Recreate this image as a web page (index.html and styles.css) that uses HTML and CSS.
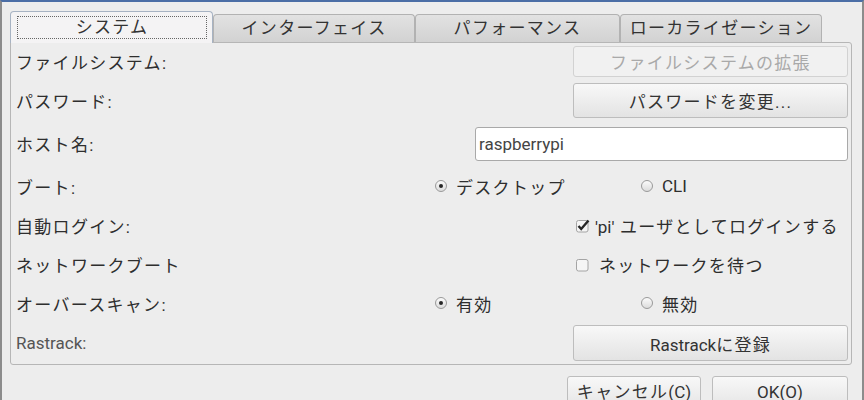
FILE: index.html
```html
<!DOCTYPE html>
<html lang="ja">
<head>
  <meta charset="UTF-8" />
  <title>Raspberry Pi の設定</title>
  <link rel="stylesheet" href="styles.css">
</head>
<body>

  <div class="window">
    <div class="tabs">
      <div class="tab active"><span class="focus">システム</span></div>
      <div class="tab">インターフェイス</div>
      <div class="tab perf">パフォーマンス</div>
      <div class="tab">ローカライゼーション</div>
    </div>

    <div class="panel">
      <div class="row r1">
        <span class="label">ファイルシステム:</span>
        <button class="btn side" disabled>ファイルシステムの拡張</button>
      </div>
      <div class="row r2">
        <span class="label">パスワード:</span>
        <button class="btn side">パスワードを変更...</button>
      </div>
      <div class="row r3">
        <span class="label">ホスト名:</span>
        <input class="field" type="text" value="raspberrypi">
      </div>
      <div class="row r4">
        <span class="label">ブート:</span>
        <div class="opts">
          <span class="opt">
            <span class="radio on"></span>
            デスクトップ
          </span>
          <span class="opt">
            <span class="radio"></span>
            <span class="en">CLI</span>
          </span>
        </div>
      </div>
      <div class="row r5">
        <span class="label">自動ログイン:</span>
        <span class="check">
          <svg width="14" height="14" viewBox="0 0 14 14"><rect x="0.5" y="1.5" width="11.5" height="11.5" rx="2" fill="#f5f5f5" stroke="#a4a4a4"/><path d="M2.5 7 L5.2 10 L12.5 1.5" fill="none" stroke="#262626" stroke-width="2.4"/></svg>
          <span><span class="en">'pi'</span> ユーザとしてログインする</span>
        </span>
      </div>
      <div class="row r6">
        <span class="label">ネットワークブート</span>
        <span class="check">
          <svg width="14" height="14" viewBox="0 0 14 14"><rect x="0.5" y="1.5" width="11.5" height="11.5" rx="2" fill="#f5f5f5" stroke="#a4a4a4"/></svg>
          <span class="pad">ネットワークを待つ</span>
        </span>
      </div>
      <div class="row r7">
        <span class="label">オーバースキャン:</span>
        <div class="opts">
          <span class="opt">
            <span class="radio on"></span>
            有効
          </span>
          <span class="opt">
            <span class="radio"></span>
            無効
          </span>
        </div>
      </div>
      <div class="row r8">
        <span class="label en muted">Rastrack:</span>
        <button class="btn side"><span class="en">Rastrack</span>に登録</button>
      </div>
    </div>

    <div class="actions">
      <button class="btn cancel">キャンセル<span class="en">(C)</span></button>
      <button class="btn ok"><span class="en">OK(O)</span></button>
    </div>
  </div>

</body>
</html>
```

FILE: styles.css
```css
html, body {
  margin: 0;
  height: 400px;
  overflow: hidden;
}

body {
  font-family: Roboto, "Noto Sans CJK JP", sans-serif;
  font-size: 17px;
  letter-spacing: 1.3px;
  color: #2e2e2e;
  background: #ededed;
}

.en {
  letter-spacing: 0;
}

.window {
  box-sizing: border-box;
  width: 864px;
  height: 400px;
  border-top: 2px solid #4b6ea6;
  border-left: 2px solid #8c8c8c;
  border-right: 2px solid #8c8c8c;
  padding: 7px 10px 0 8px;
  background: #ededed;
}

/* tabs */
.tabs {
  display: flex;
  align-items: flex-end;
  height: 33px;
}

.tab {
  box-sizing: border-box;
  width: 202px;
  height: 28px;
  line-height: 26px;
  text-align: center;
  border: 1px solid #b2b2b2;
  border-bottom: none;
  border-radius: 4px 4px 0 0;
  background: linear-gradient(#e2e2e2, #d2d2d2);
  color: #333;
}

.tab.perf { width: 205px; }

.tab.active {
  width: 203px;
  height: 32px;
  margin-bottom: -1px;
  position: relative;
  z-index: 1;
  border-color: #a7b3c3;
  background: #f4f3f4;
}

.focus {
  display: block;
  box-sizing: border-box;
  height: 23px;
  line-height: 21px;
  margin: 4px 5px 0 6px;
  border: 1px dotted #666;
}

/* panel */
.panel {
  box-sizing: border-box;
  height: 323px;
  border: 1px solid #b6b6b6;
  border-radius: 0 3px 3px 3px;
  padding: 0 3px 0 5px;
}

.row {
  display: flex;
  align-items: center;
}

.r1 { height: 37px; }
.r2 { height: 41px; }
.r3 { height: 45px; }
.r4 { height: 40px; }
.r5 { height: 39px; }
.r6 { height: 39px; }
.r7 { height: 38px; }
.r8 { height: 42px; }

.label {
  flex: 1;
}

.muted { color: #555; }

.btn {
  box-sizing: border-box;
  font-family: Roboto, "Noto Sans CJK JP", sans-serif;
  font-size: 17px;
  letter-spacing: 1.3px;
  color: #333;
  background: linear-gradient(#f8f8f8, #e3e3e3);
  border: 1px solid #bdbdbd;
  border-radius: 3px;
  padding: 0;
}

.btn:disabled {
  color: #a9a9a9;
  background: #f1f1f1;
  border-color: #d2d2d2;
}

.btn.side {
  width: 275px;
  height: 31px;
}

.r2 .btn.side { height: 35px; }
.r8 .btn.side { height: 36px; }

.field {
  box-sizing: border-box;
  width: 373px;
  height: 34px;
  padding: 0 3px;
  font-family: Roboto, sans-serif;
  font-size: 17px;
  letter-spacing: 0;
  color: #444;
  background: #fff;
  border: 1px solid #a9a9a9;
  border-radius: 3px;
}

.opts {
  display: flex;
  width: 413px;
}

.opt {
  display: flex;
  align-items: center;
  gap: 9px;
  width: 206px;
}

.radio {
  box-sizing: border-box;
  width: 12px;
  height: 12px;
  border-radius: 50%;
  border: 1px solid #9a9a9a;
  background: linear-gradient(#fbfbfb, #dcdcdc);
  display: flex;
  align-items: center;
  justify-content: center;
}

.radio.on::after {
  content: "";
  width: 4px;
  height: 4px;
  border-radius: 50%;
  background: #262626;
}

.check {
  display: flex;
  align-items: center;
  gap: 5px;
  width: 272px;
  white-space: nowrap;
}

.check .pad {
  padding-left: 4px;
}

/* dialog buttons */
.actions {
  display: flex;
  justify-content: flex-end;
  gap: 11px;
  margin-top: 11px;
  padding-right: 4px;
}

.actions .btn {
  height: 36px;
  line-height: 30px;
  padding-bottom: 4px;
}

.cancel { width: 134px; }
.ok { width: 136px; }
```
